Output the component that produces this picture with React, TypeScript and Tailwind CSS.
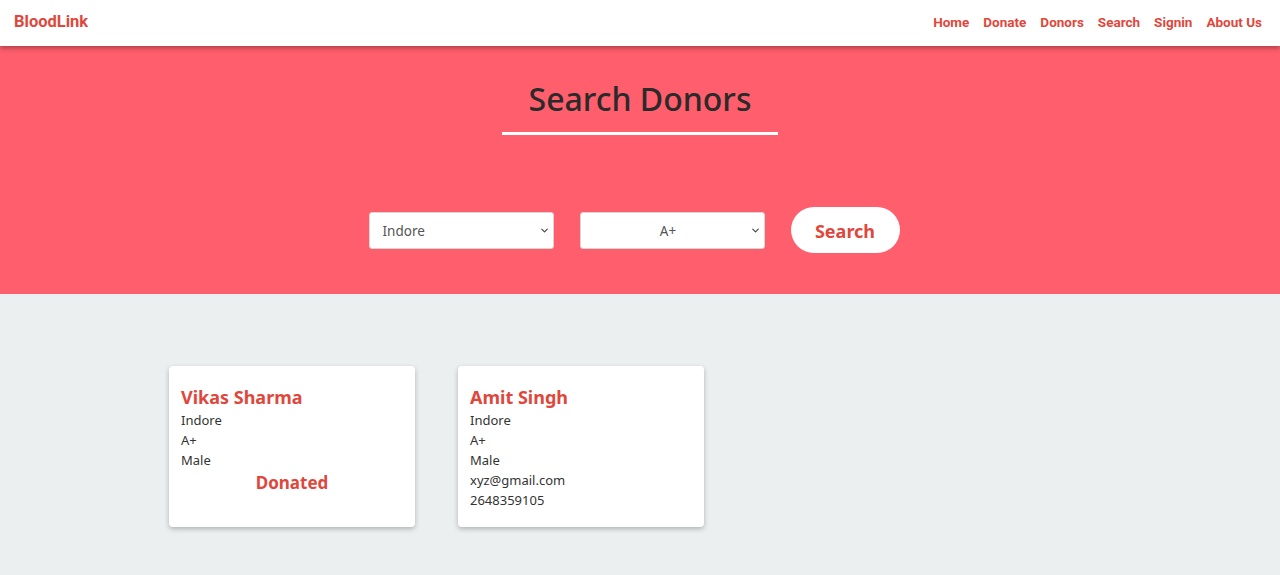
import { ChevronDown } from 'lucide-react';

const links = ['Home', 'Donate', 'Donors', 'Search', 'Signin', 'About Us'];

const donors = [
    { name: 'Vikas Sharma', city: 'Indore', group: 'A+', gender: 'Male', donated: true },
    { name: 'Amit Singh', city: 'Indore', group: 'A+', gender: 'Male', email: 'xyz@gmail.com', phone: '2648359105' },
];

function Select({ value, center }: { value: string; center?: boolean }) {
    return (
        <div className="relative w-[185px] h-[37px] bg-white rounded-[3px] border border-[#d5d5d5] flex items-center">
            <span className={`flex-1 pt-[3px] text-[13.5px] text-[#555] ${center ? 'text-center pl-[6px]' : 'pl-[13px]'}`}>{value}</span>
            <ChevronDown className="w-[11px] h-[11px] text-[#444] mr-[3px]" strokeWidth={2.5} />
        </div>
    );
}

export default function App() {
    return (
        <div className="min-h-[575px] bg-[#ebeff0] font-['Noto_Sans',sans-serif]">
            <nav className="relative z-10 h-[46px] bg-white flex items-center justify-between px-[14px] pb-[1px] shadow-[0_2px_5px_rgba(0,0,0,0.35)] font-['Roboto',sans-serif]">
                <span className="text-[#e0473c] text-[16.5px] font-bold">BloodLink</span>
                <div className="flex gap-[14px] pr-[4px]">
                    {links.map((l) => (
                        <a key={l} className="text-[#e0473c] text-[13.5px] font-bold">{l}</a>
                    ))}
                </div>
            </nav>

            <section className="h-[248px] bg-[#ff5e6c] flex flex-col items-center">
                <h1 className="mt-[30px] text-[32px] leading-[46px] text-[#2a2a2a] font-medium">Search Donors</h1>
                <div className="mt-[10px] w-[276px] h-[3px] bg-white" />
                <div className="mt-[72px] mr-[12px] flex items-center gap-[26px]">
                    <Select value="Indore" />
                    <Select value="A+" center />
                    <button className="w-[109px] h-[46px] pt-[2px] rounded-full bg-white text-[#e0473c] text-[18px] font-bold">Search</button>
                </div>
            </section>

            <div className="flex gap-[43px] pl-[169px] pt-[72px]">
                {donors.map((d) => (
                    <div key={d.name} className="w-[246px] h-[161px] bg-white rounded-[4px] shadow-[0_2px_5px_rgba(0,0,0,0.25)] px-[12px] pt-[19px] text-[13px] leading-[20px] text-[#333]">
                        <h2 className="text-[#e0473c] text-[18px] font-bold leading-[24px] mb-[1px]">{d.name}</h2>
                        <p>{d.city}</p>
                        <p>{d.group}</p>
                        <p>{d.gender}</p>
                        {d.donated && <p className="text-center text-[#e0473c] text-[17px] font-bold leading-[24px] mt-[1px]">Donated</p>}
                        {d.email && <p>{d.email}</p>}
                        {d.phone && <p>{d.phone}</p>}
                    </div>
                ))}
            </div>
        </div>
    );
}
